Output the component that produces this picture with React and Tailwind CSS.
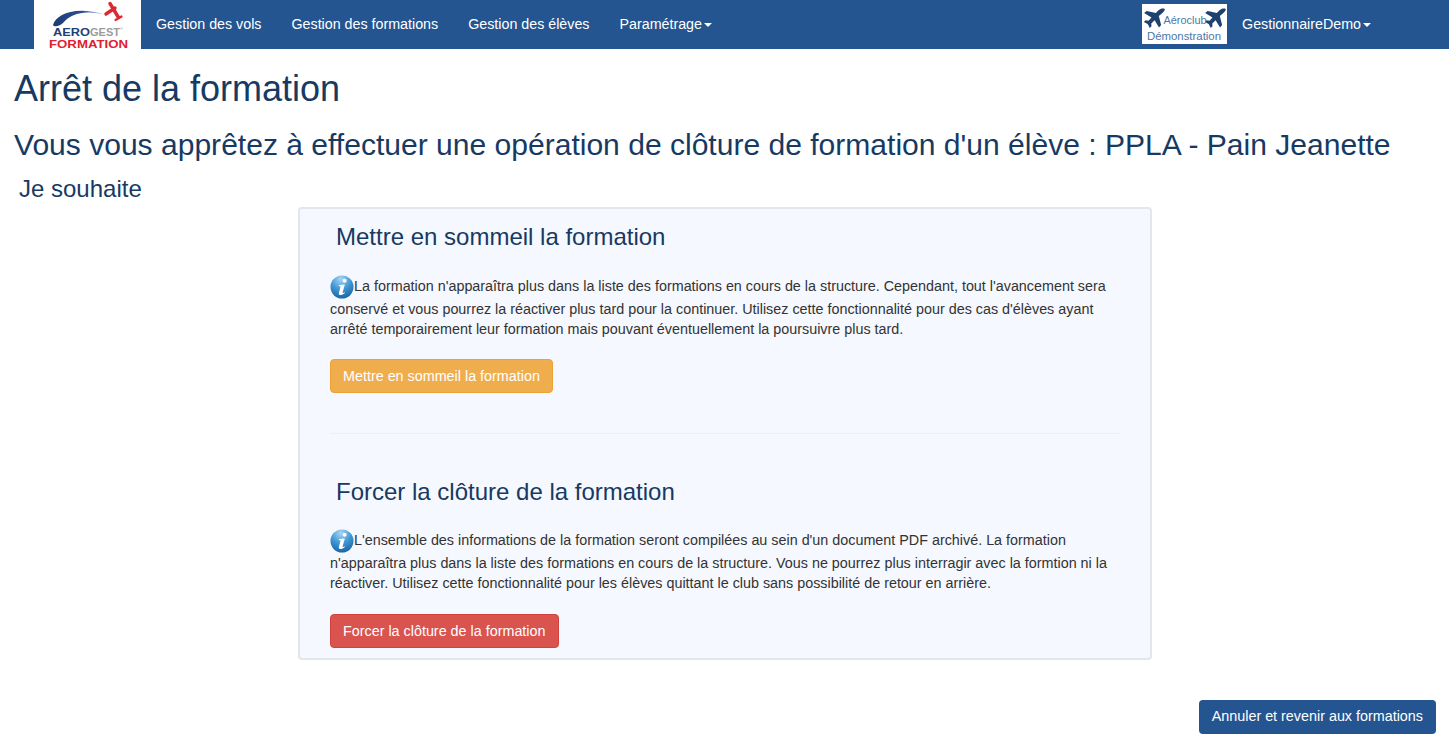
const Caret = () => (
  <span className="inline-block ml-[2px] align-middle w-0 h-0 border-x-4 border-x-transparent border-t-4 border-t-white" />
);

const NavLink = ({ children, caret }) => (
  <a className="flex items-center px-[15px] h-full text-[14.27px] text-white whitespace-nowrap">
    {children}
    {caret && <Caret />}
  </a>
);

const Logo = () => (
  <svg viewBox="0 0 107 49" className="w-[107px] h-[49px] block bg-white" style={{ fontFamily: '"Liberation Sans", Arial, sans-serif' }}>
    <defs>
      <linearGradient id="sw" x1="0" x2="1" y1="0" y2="0">
        <stop offset="0" stopColor="#1c3c78" />
        <stop offset="0.55" stopColor="#2c4f8c" />
        <stop offset="1" stopColor="#dfe5ef" />
      </linearGradient>
    </defs>
    <path d="M19 25 C22 14 42 5 72 15 C52 9.5 37 13 29 23 C26.5 26 20 27.5 19 25Z" fill="url(#sw)" />
    <g stroke="#dc2a33" strokeLinecap="round" fill="none">
      <path d="M76 3.5 L84.5 17.5" strokeWidth="3.4" />
      <path d="M72 14 L81 8" strokeWidth="3.4" />
      <path d="M81.5 20 L87.5 16.5" strokeWidth="2.2" />
    </g>
    <text x="19" y="35.5" fontSize="11" fontWeight="700" fill="#1f3f77" textLength="37" lengthAdjust="spacingAndGlyphs">AERO</text>
    <text x="56" y="35.5" fontSize="11" fontWeight="700" fill="#9c9c9c" textLength="30" lengthAdjust="spacingAndGlyphs">GEST</text>
    <text x="86" y="30" fontSize="4" fill="#9c9c9c">®</text>
    <text x="15" y="47.5" fontSize="10.5" fontWeight="700" fill="#e0202c" textLength="79" lengthAdjust="spacingAndGlyphs">FORMATION</text>
  </svg>
);

const Plane = ({ x }) => (
  <path
    transform={`translate(${x} 4.5) scale(1.05)`}
    d="M20 0.3 C18.4 -0.3 15.8 0.2 14 2 L11.8 4.4 L3 2.4 L0.6 4.4 L7.6 8.6 L4.8 11.6 L2 11.2 L0.4 12.8 L4 14.8 L6 18.6 L7.6 17 L7.4 14.2 L10.6 11.2 L14.8 18 L16.8 15.8 L14.6 7.2 L18 4.4 C19.8 2.8 20.8 1 20 0.3Z"
    fill="#20406f"
  />
);

const ClubLogo = () => (
  <svg viewBox="0 0 85 40" className="w-[85px] h-[40px] block bg-white mb-px" style={{ fontFamily: '"Liberation Sans", Arial, sans-serif' }}>
    <Plane x={1.5} />
    <Plane x={62.5} />
    <text x="21.5" y="20" fontSize="11" fill="#4a78a8" textLength="43" lengthAdjust="spacingAndGlyphs">Aéroclub</text>
    <text x="5" y="35.5" fontSize="11" fill="#4a78a8" textLength="74" lengthAdjust="spacingAndGlyphs">Démonstration</text>
  </svg>
);

const InfoIcon = ({ id }) => (
  <svg viewBox="0 0 24 24" className="inline-block w-6 h-6 align-[-8px]">
    <defs>
      <radialGradient id={id} cx="45%" cy="15%" r="90%">
        <stop offset="0" stopColor="#a9d5f2" />
        <stop offset="0.5" stopColor="#3f97d4" />
        <stop offset="1" stopColor="#17609f" />
      </radialGradient>
    </defs>
    <circle cx="12" cy="12" r="11.5" fill={`url(#${id})`} />
    <circle cx="14.6" cy="5.8" r="2" fill="#fff" />
    <path d="M9 10 L14.8 9.5 L12.6 17.4 C12.4 18.2 13 18.3 14.6 17.3 L14.8 18 C13 19.6 11.6 20 10.2 20 C8.8 20 8.6 19 8.9 17.8 L10.6 11.4 L8.9 11 Z" fill="#fff" />
  </svg>
);

const Section = ({ id, title, children, button, btnClass, titleClass }) => (
  <div>
    <h3 className={`text-[24px] leading-[26px] text-[#163a63] pl-[6px] ${titleClass}`}>{title}</h3>
    <p className="text-[14.35px] leading-[20px] text-[#333]">
      <InfoIcon id={id} />
      {children}
    </p>
    <button className={`h-[34px] px-3 pt-px rounded border text-[14.35px] text-white ${btnClass}`}>{button}</button>
  </div>
);

export default function App() {
  return (
    <div className="h-[746px] bg-white flex flex-col overflow-hidden" style={{ fontFamily: '"Liberation Sans", Arial, sans-serif' }}>
      <nav className="h-[49px] bg-[#245591] flex items-stretch shrink-0">
        <div className="ml-[34px]"><Logo /></div>
        <NavLink>Gestion des vols</NavLink>
        <NavLink>Gestion des formations</NavLink>
        <NavLink>Gestion des élèves</NavLink>
        <NavLink caret>Paramétrage</NavLink>
        <div className="ml-auto mr-[63px] flex items-center">
          <ClubLogo />
          <NavLink caret>GestionnaireDemo</NavLink>
        </div>
      </nav>

      <main className="flex-1 flex flex-col px-[14px] text-[#163a63]">
        <h1 className="mt-[20px] text-[36px] leading-[40px]">Arrêt de la formation</h1>
        <h2 className="mt-[19px] text-[30.05px] leading-[33px] whitespace-nowrap">Vous vous apprêtez à effectuer une opération de clôture de formation d'un élève : PPLA - Pain Jeanette</h2>
        <h3 className="mt-[16px] pl-[5px] text-[24px] leading-[24px]">Je souhaite</h3>

        <div className="mt-[6px] ml-[284px] w-[854px] h-[453px] rounded border-2 border-[#e3e6ea] bg-[#f5f8fe] px-[30px] pt-[15px]">
          <Section id="info-a" title="Mettre en sommeil la formation" titleClass="mb-[25px]" button="Mettre en sommeil la formation" btnClass="mt-[20px] bg-[#f0ad4e] border-[#eea236]">
            La formation n'apparaîtra plus dans la liste des formations en cours de la structure. Cependant, tout l'avancement sera conservé et vous pourrez la réactiver plus tard pour la continuer. Utilisez cette fonctionnalité pour des cas d'élèves ayant arrêté temporairement leur formation mais pouvant éventuellement la poursuivre plus tard.
          </Section>
          <hr className="mt-[40px] mb-[45px] border-t border-[#eeeeee]" />
          <Section id="info-b" title="Forcer la clôture de la formation" titleClass="mb-[24px]" button="Forcer la clôture de la formation" btnClass="mt-[21px] bg-[#d9534f] border-[#d43f3a]">
            L'ensemble des informations de la formation seront compilées au sein d'un document PDF archivé. La formation n'apparaîtra plus dans la liste des formations en cours de la structure. Vous ne pourrez plus interragir avec la formtion ni la réactiver. Utilisez cette fonctionnalité pour les élèves quittant le club sans possibilité de retour en arrière.
          </Section>
        </div>

        <div className="mt-[40px] flex justify-end -mr-px">
          <button className="h-[34px] px-[13px] rounded bg-[#245591] text-[14.35px] text-white">Annuler et revenir aux formations</button>
        </div>
      </main>
    </div>
  );
}
